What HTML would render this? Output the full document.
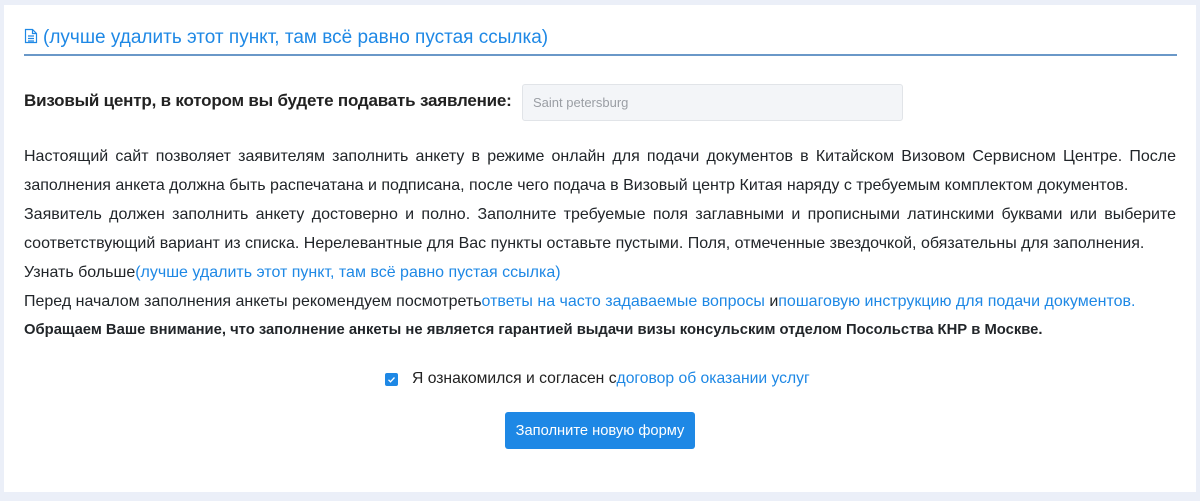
<!DOCTYPE html>
<html><head><meta charset="utf-8"><style>
body{margin:0;width:1200px;height:501px;background:#ebeff8;font-family:"Liberation Sans",sans-serif;overflow:hidden;position:relative}
.card{position:absolute;left:4px;top:5px;width:1192px;height:487px;background:#fff}
.a{position:absolute;white-space:nowrap}
.title{left:24px;top:27px;font-size:19px;color:#1e88e5}
.rule{position:absolute;left:24px;top:54px;width:1153px;height:2px;background:#6a98c8}
.lab{left:24px;top:91px;font-size:17px;font-weight:bold;color:#222;letter-spacing:-0.2px}
.inp{position:absolute;left:522px;top:84px;width:381px;height:37px;background:#f3f5f8;border:1px solid #e1e4e8;border-radius:3px;box-sizing:border-box;font-size:13px;color:#9a9ea4;padding:10px 10px}
.ln{position:absolute;left:24px;width:1152px;font-size:16px;color:#212529;white-space:nowrap}
.j{text-align:justify;text-align-last:justify;white-space:normal}
.lk{color:#1e88e5}
.cb{position:absolute;left:385px;top:373px;width:13px;height:13px;background:#1e88e5;border-radius:2px}
.btn{position:absolute;left:505px;top:412px;width:190px;height:37px;background:#1e88e5;border-radius:3px;color:#fff;font-size:14.7px;text-align:center;line-height:38px}
</style></head><body>
<div class="card"></div>
<div class="a title"><svg width="14" height="16" viewBox="0 0 14 16" style="vertical-align:-1px;margin-right:5px"><path d="M1.5 1.5h7l4 4v9h-11z M8.5 1.5v4h4 M4 8h6 M4 10.5h6 M4 13h6" fill="none" stroke="#1e88e5" stroke-width="1.2"/></svg>(лучше удалить этот пункт, там всё равно пустая ссылка)</div>
<div class="rule"></div>
<div class="a lab">Визовый центр, в котором вы будете подавать заявление:</div>
<div class="inp">Saint petersburg</div>
<div class="ln j" style="top:148px">Настоящий сайт позволяет заявителям заполнить анкету в режиме онлайн для подачи документов в Китайском Визовом Сервисном Центре. После</div>
<div class="ln" style="top:177px">заполнения анкета должна быть распечатана и подписана, после чего подача в Визовый центр Китая наряду с требуемым комплектом документов.</div>
<div class="ln j" style="top:206px">Заявитель должен заполнить анкету достоверно и полно. Заполните требуемые поля заглавными и прописными латинскими буквами или выберите</div>
<div class="ln" style="top:235px">соответствующий вариант из списка. Нерелевантные для Вас пункты оставьте пустыми. Поля, отмеченные звездочкой, обязательны для заполнения.</div>
<div class="ln" style="top:264px">Узнать больше<span class="lk">(лучше удалить этот пункт, там всё равно пустая ссылка)</span></div>
<div class="ln" style="top:293px">Перед началом заполнения анкеты рекомендуем посмотреть<span class="lk">ответы на часто задаваемые вопросы </span>и<span class="lk">пошаговую инструкцию для подачи документов.</span></div>
<div class="ln" style="top:322px;font-weight:bold;font-size:14.8px">Обращаем Ваше внимание, что заполнение анкеты не является гарантией выдачи визы консульским отделом Посольства КНР в Москве.</div>
<div class="cb"><svg width="13" height="13" viewBox="0 0 13 13"><path d="M3.5 6.8l2 2 4-4.3" fill="none" stroke="#fff" stroke-width="1.3"/></svg></div>
<div class="a" style="left:412px;top:370px;font-size:15.7px;color:#222">Я ознакомился и согласен с<span class="lk">договор об оказании услуг</span></div>
<div class="btn">Заполните новую форму</div>
</body></html>
